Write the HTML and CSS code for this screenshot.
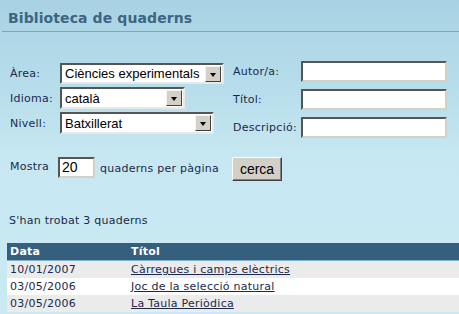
FILE: index.html
```html
<!DOCTYPE html>
<html>
<head>
<meta charset="utf-8">
<link rel="stylesheet" href="styles.css">
</head>
<body>
<div class="page">
  <h1 class="title">Biblioteca de quaderns</h1>
  <form class="search">
    <div class="fields">
      <div class="col left">
        <label class="lbl">Àrea:</label>
        <div class="sel w1"><span class="val">Ciències experimentals</span><span class="arrow"></span></div>
        <label class="lbl">Idioma:</label>
        <div class="sel w2"><span class="val">català</span><span class="arrow"></span></div>
        <label class="lbl">Nivell:</label>
        <div class="sel w3"><span class="val">Batxillerat</span><span class="arrow"></span></div>
      </div>
      <div class="col right">
        <label class="lbl">Autor/a:</label>
        <div class="txt"></div>
        <label class="lbl">Títol:</label>
        <div class="txt"></div>
        <label class="lbl">Descripció:</label>
        <div class="txt"></div>
      </div>
    </div>
    <div class="perpage">
      <span class="lbl mostra">Mostra</span>
      <div class="txt num">20</div>
      <span class="lbl">quaderns per pàgina</span>
      <div class="btn">cerca</div>
    </div>
  </form>
  <p class="found">S'han trobat 3 quaderns</p>
  <table class="results">
    <thead>
      <tr><th class="c1">Data</th><th>Títol</th></tr>
    </thead>
    <tbody>
      <tr class="odd"><td class="c1">10/01/2007</td><td><a href="#">Càrregues i camps elèctrics</a></td></tr>
      <tr><td class="c1">03/05/2006</td><td><a href="#">Joc de la selecció natural</a></td></tr>
      <tr class="odd"><td class="c1">03/05/2006</td><td><a href="#">La Taula Periòdica</a></td></tr>
    </tbody>
  </table>
</div>
</body>
</html>
```

FILE: styles.css
```css
html, body {
  margin: 0;
  padding: 0;
}
body {
  width: 459px;
  height: 314px;
  overflow: hidden;
  background: linear-gradient(to bottom, #a8d2e3 0px, #b9dfec 100px, #c7e8f2 160px, #c9e9f3 314px);
  font-family: Verdana, "DejaVu Sans", sans-serif;
  font-size: 11px;
  letter-spacing: 0.25px;
  color: #1a2a4c;
}
.page {
  padding-top: 1px;
}
.title {
  margin: 0 0 0 2px;
  padding: 10px 0 6px 6px;
  font-size: 14px;
  line-height: 14px;
  letter-spacing: 0.1px;
  font-weight: bold;
  color: #3e6583;
  border-bottom: 1px solid #6faccb;
}
.search {
  margin: 31px 0 0 0;
}
.fields {
  display: flex;
}
.col {
  display: grid;
  align-items: center;
}
.left {
  grid-template-columns: 50px 162px;
  grid-template-rows: 21px 22px 22px;
  row-gap: 3px;
  padding-left: 10px;
  margin-top: 0;
}
.right {
  grid-template-columns: 68px 146px;
  grid-template-rows: 21px 21px 21px;
  row-gap: 7px;
  margin-left: 11px;
  margin-top: -2px;
}
.lbl {
  white-space: nowrap;
}
.sel {
  box-sizing: border-box;
  height: 100%;
  display: flex;
  align-items: center;
  background: #fff;
  border: 2px solid;
  border-color: #555 #e8e8e8 #e8e8e8 #555;
  font-family: "Liberation Sans", Arial, sans-serif;
  font-size: 13px;
  letter-spacing: 0;
  color: #000;
}
.w1 { width: 164px; }
.w2 { width: 125px; }
.w3 { width: 154px; }
.val {
  flex: 1;
  padding-left: 3px;
  white-space: nowrap;
  overflow: hidden;
}
.arrow {
  box-sizing: border-box;
  width: 16px;
  height: 16px;
  margin-right: 1px;
  background: #d4d0c8;
  border: 1px solid;
  border-color: #f4f4f4 #404040 #404040 #f4f4f4;
  position: relative;
}
.arrow::after {
  content: "";
  position: absolute;
  left: 4px;
  top: 6px;
  border-left: 3.5px solid transparent;
  border-right: 3.5px solid transparent;
  border-top: 4px solid #000;
}
.txt {
  box-sizing: border-box;
  height: 21px;
  background: #fff;
  border: 2px solid;
  border-color: #555 #d4d0c8 #d4d0c8 #555;
}
.perpage {
  display: flex;
  align-items: center;
  margin-top: 17px;
  padding-left: 10px;
}
.num {
  width: 37px;
  margin-left: 9px;
  margin-right: 5px;
  font-family: "Liberation Sans", Arial, sans-serif;
  font-size: 14px;
  letter-spacing: 0;
  line-height: 17px;
  color: #000;
  padding-left: 2px;
  margin-top: -2px;
}
.mostra {
  margin-top: -4px;
}
.btn {
  box-sizing: border-box;
  width: 50px;
  height: 24px;
  margin-left: 13px;
  margin-top: 2px;
  background: #d4d0c8;
  border: 1px solid;
  border-color: #fff #404040 #404040 #fff;
  box-shadow: inset -1px -1px 0 #808080;
  display: flex;
  align-items: center;
  justify-content: center;
  font-family: "Liberation Sans", Arial, sans-serif;
  font-size: 14px;
  letter-spacing: 0;
  color: #000;
}
.found {
  margin: 32px 0 0 9px;
  line-height: 15px;
}
.results {
  margin: 15px 0 0 7px;
  width: 452px;
  border-collapse: collapse;
}
.results th {
  background: #365f7e;
  color: #fff;
  text-align: left;
  font-weight: bold;
  height: 17px;
  padding: 0 0 0 3px;
  line-height: 17px;
  border-bottom: 1px solid #7fb4d0;
}
.results td {
  height: 17px;
  padding: 0 0 0 3px;
  line-height: 17px;
  background: #fff;
}
.results tr.odd td {
  background: #ebebeb;
}
.results .c1 {
  width: 118px;
}
.results a {
  color: #1a2a4c;
  text-decoration: underline;
}
```
